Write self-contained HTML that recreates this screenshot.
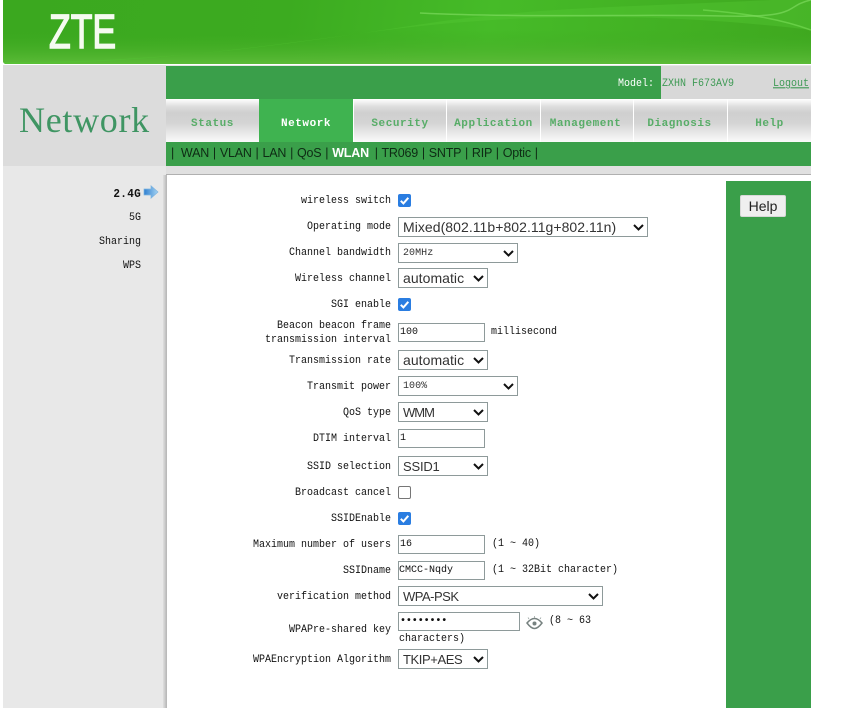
<!DOCTYPE html>
<html>
<head>
<meta charset="utf-8">
<title>ZTE Network</title>
<style>
html,body{margin:0;padding:0;width:841px;height:708px;overflow:hidden;background:#fff}
div,span,input,select,button,svg{position:absolute;box-sizing:border-box}
.m{font-family:"Liberation Mono",monospace;font-size:10px;line-height:14px;color:#111;white-space:pre;margin-top:2px;transform:scaleY(1.12)}
.l{right:450px;text-align:right;margin-top:4px}
.d{margin-top:4px}
.tab{top:99px;height:43px;background:linear-gradient(#fff 0,#f2f2f2 3px,#dcdcdc 8px,#cfcfcf 14px,#d4d4d4 24px,#f0f0f0 38px,#fafafa 43px);font-family:"Liberation Mono",monospace;font-weight:bold;font-size:11px;letter-spacing:.55px;color:#58ad68;text-align:center;line-height:51px;white-space:pre}
select{appearance:none;-webkit-appearance:none;font-family:"Liberation Sans",sans-serif;font-size:14px;letter-spacing:.05px;color:#333;background:#fff;border:1px solid #8e9a9a;border-radius:0;left:398px;height:20px;padding:0 0 0 4px;margin:0;outline:0}
.t{left:398px;width:87px;height:19px;border:1px solid #8e9a9a;background:#fff;font-family:"Liberation Mono",monospace;font-size:10px;line-height:18px;color:#111;padding-left:1px;white-space:pre}
.c{left:398px;width:13px;height:13px;background:#2a7de1;border-radius:2px}
.c svg{left:0;top:0}
.c.off{background:#fff;border:1px solid #767676}
.v{width:11px;height:7px}
</style>
</head>
<body>
<div style="left:3px;top:0;width:808px;height:64px;background:linear-gradient(100deg,#3ba81f 0,#3cab20 35%,#46bb28 60%,#3fa81f 100%);overflow:hidden;border-radius:0 0 0 3px">
<svg width="808" height="64" style="left:0;top:0">
<defs><linearGradient id="g" x1="0" y1="0" x2="0" y2="1"><stop offset="0" stop-color="#3aa81e" stop-opacity="0"/><stop offset="1" stop-color="#5cbb38"/></linearGradient></defs>
<rect y="30" width="808" height="34" fill="url(#g)"/>
<path d="M0 62C180 62 300 42 420 24S620 8 808 -2V0L808 30C640 10 500 16 400 28S160 64 0 64Z" fill="#56c935" opacity=".4"/>
<path d="M700 10C750 14 780 20 808 30" fill="none" stroke="#74d851" stroke-width="1.5" opacity=".7"/>
<path d="M417 13C520 18 640 14 720 16S780 6 808 0" fill="none" stroke="#86e066" stroke-width="1.5" opacity=".6"/>
</svg>
</div>
<div style="left:49px;top:5px;font-family:'Liberation Sans',sans-serif;font-size:48px;line-height:55px;color:#f5fbf0;transform:scaleX(.74);transform-origin:0 0;-webkit-text-stroke:1.5px #f5fbf0;paint-order:stroke;letter-spacing:0">ZTE</div>

<div style="left:3px;top:65px;width:163px;height:101px;background:#dcdcdc"></div>
<div style="left:19px;top:100px;font-family:'Liberation Serif',serif;font-size:36px;line-height:41px;letter-spacing:.7px;color:#3f9563">Network</div>
<div style="left:166px;top:66px;width:495px;height:33px;background:#3a9f4a"></div>
<div style="left:661px;top:65px;width:150px;height:34px;background:#d8d8d8"></div>
<div style="left:166px;top:65px;width:645px;height:1px;background:#e6e6e6"></div>
<div class="m" style="left:618px;top:76px;color:#fff">Model:</div>
<div class="m" style="left:662px;top:76px;color:#3f9a55">ZXHN F673AV9</div>
<div class="m" style="left:773px;top:76px;color:#3f9a55;text-decoration:underline">Logout</div>

<div class="tab" style="left:166px;width:93px">Status</div>
<div class="tab" style="left:259px;width:94px;background:#3fb350;color:#fff">Network</div>
<div class="tab" style="left:354px;width:92px">Security</div>
<div class="tab" style="left:447px;width:93px">Application</div>
<div class="tab" style="left:541px;width:92px;padding-right:3px">Management</div>
<div class="tab" style="left:634px;width:93px;padding-right:2px">Diagnosis</div>
<div class="tab" style="left:728px;width:83px">Help</div>

<div style="left:166px;top:142px;width:645px;height:24px;background:#3a9f4a"></div>
<div style="left:171px;top:145px;font-family:'Liberation Sans',sans-serif;font-size:12.5px;line-height:16px;color:#0e2b14;white-space:pre;letter-spacing:-.2px;word-spacing:.6px"><b style="font-weight:normal;margin-right:3px">|</b> WAN | VLAN | LAN | QoS | <b style="color:#fff;font-weight:bold;margin-right:2px">WLAN</b> | TR069 | SNTP | RIP | Optic |</div>

<div style="left:3px;top:166px;width:163px;height:542px;background:#e8e8e8"></div>
<div style="left:166px;top:166px;width:645px;height:9px;background:#e0e0e0;border-bottom:1px solid #b0b0b0"></div>
<div style="left:163px;top:175px;width:4px;height:533px;background:linear-gradient(90deg,#e0e0e0,#b4b4b4)"></div>

<div class="m" style="right:700px;top:186px;font-weight:bold;font-size:11px;letter-spacing:.3px">2.4G</div>
<svg width="16" height="14" viewBox="0 0 16 14" style="left:143px;top:185px"><defs><linearGradient id="b" x1="0" x2="1"><stop offset="0" stop-color="#2f7fd0"/><stop offset="1" stop-color="#a6d4f2"/></linearGradient></defs><path d="M1 4H8V.8L15 7L8 13.2V10H1Z" fill="url(#b)" stroke="#7fb5e0" stroke-width=".7"/></svg>
<div class="m" style="right:700px;top:210px">5G</div>
<div class="m" style="right:700px;top:234px">Sharing</div>
<div class="m" style="right:700px;top:258px">WPS</div>

<div class="m l" style="top:191px">wireless switch</div>
<div class="m l" style="top:217px">Operating mode</div>
<div class="m l" style="top:243px">Channel bandwidth</div>
<div class="m l" style="top:269px">Wireless channel</div>
<div class="m l" style="top:295px">SGI enable</div>
<div class="m l" style="top:316px">Beacon beacon frame</div>
<div class="m l" style="top:330px">transmission interval</div>
<div class="m l" style="top:351px">Transmission rate</div>
<div class="m l" style="top:377px">Transmit power</div>
<div class="m l" style="top:403px">QoS type</div>
<div class="m l" style="top:429px">DTIM interval</div>
<div class="m l" style="top:457px">SSID selection</div>
<div class="m l" style="top:483px">Broadcast cancel</div>
<div class="m l" style="top:509px">SSIDEnable</div>
<div class="m l" style="top:535px">Maximum number of users</div>
<div class="m l" style="top:561px">SSIDname</div>
<div class="m l" style="top:587px">verification method</div>
<div class="m l" style="top:620px">WPAPre-shared key</div>
<div class="m l" style="top:650px">WPAEncryption Algorithm</div>

<div class="c" style="top:194px"><svg width="13" height="13"><path d="M2.8 6.8L5.4 9.4L10.3 3.8" fill="none" stroke="#fff" stroke-width="2"/></svg></div>
<select style="top:217px;width:250px"><option>Mixed(802.11b+802.11g+802.11n)</option></select>
<svg class="v" style="left:633px;top:224px"><path d="M1 1L5.500 5.500L10 1" fill="none" stroke="#111" stroke-width="2"/></svg>
<select style="top:243px;width:120px;font-family:'Liberation Mono',monospace;font-size:10px"><option>20MHz</option></select>
<svg class="v" style="left:503px;top:250px"><path d="M1 1L5.500 5.500L10 1" fill="none" stroke="#111" stroke-width="2"/></svg>
<select style="top:268px;width:90px"><option>automatic</option></select>
<svg class="v" style="left:473px;top:275px"><path d="M1 1L5.500 5.500L10 1" fill="none" stroke="#111" stroke-width="2"/></svg>
<div class="c" style="top:298px"><svg width="13" height="13"><path d="M2.8 6.8L5.4 9.4L10.3 3.8" fill="none" stroke="#fff" stroke-width="2"/></svg></div>
<div class="t" style="top:323px">100</div>
<div class="m d" style="left:491px;top:322px">millisecond</div>
<select style="top:350px;width:90px"><option>automatic</option></select>
<svg class="v" style="left:473px;top:357px"><path d="M1 1L5.500 5.500L10 1" fill="none" stroke="#111" stroke-width="2"/></svg>
<select style="top:376px;width:120px;font-family:'Liberation Mono',monospace;font-size:10px"><option>100%</option></select>
<svg class="v" style="left:503px;top:383px"><path d="M1 1L5.500 5.500L10 1" fill="none" stroke="#111" stroke-width="2"/></svg>
<select style="top:402px;width:90px;font-size:13px;letter-spacing:-1px"><option>WMM</option></select>
<svg class="v" style="left:473px;top:409px"><path d="M1 1L5.500 5.500L10 1" fill="none" stroke="#111" stroke-width="2"/></svg>
<div class="t" style="top:429px">1</div>
<select style="top:456px;width:90px;font-size:13px;letter-spacing:-.2px"><option>SSID1</option></select>
<svg class="v" style="left:473px;top:463px"><path d="M1 1L5.500 5.500L10 1" fill="none" stroke="#111" stroke-width="2"/></svg>
<div class="c off" style="top:486px"></div>
<div class="c" style="top:512px"><svg width="13" height="13"><path d="M2.8 6.8L5.4 9.4L10.3 3.8" fill="none" stroke="#fff" stroke-width="2"/></svg></div>
<div class="t" style="top:535px">16</div>
<div class="m d" style="left:492px;top:534px">(1 ~ 40)</div>
<div class="t" style="top:561px;padding-left:0">CMCC-Nqdy</div>
<div class="m d" style="left:492px;top:560px">(1 ~ 32Bit character)</div>
<select style="top:586px;width:205px;font-size:13px;letter-spacing:-.5px"><option>WPA-PSK</option></select>
<svg class="v" style="left:588px;top:593px"><path d="M1 1L5.500 5.500L10 1" fill="none" stroke="#111" stroke-width="2"/></svg>
<div class="t" style="top:612px;width:122px;font-size:10px;line-height:17px;padding-left:1px;font-weight:bold;letter-spacing:-.1px">••••••••</div>
<svg width="17" height="15" viewBox="0 0 17 15" style="left:526px;top:615px"><path d="M1 8C4 4.500 7 3.500 8.500 3.500S13 4.500 16 8C13 12 10.500 13.500 8.500 13.500S4 12 1 8Z" fill="none" stroke="#778280" stroke-width="1.500"/><circle cx="8.500" cy="8.500" r="2" fill="#778280"/><path d="M3 4L2 2.500M8.500 3V1M14 4L15 2.500" stroke="#9aa4a2" stroke-width=".8"/></svg>
<div class="m d" style="left:549px;top:611px">(8 ~ 63</div>
<div class="m d" style="left:399px;top:629px">characters)</div>
<select style="top:649px;width:90px;font-size:13px;letter-spacing:-.4px"><option>TKIP+AES</option></select>
<svg class="v" style="left:473px;top:656px"><path d="M1 1L5.500 5.500L10 1" fill="none" stroke="#111" stroke-width="2"/></svg>

<div style="left:726px;top:181px;width:85px;height:527px;background:#3a9f4a"></div>
<button style="left:740px;top:195px;width:46px;height:22px;background:#efefef;border:1px solid #d8d8d8;border-radius:2px;font-family:'Liberation Sans',sans-serif;font-size:14px;color:#222;padding:0">Help</button>
</body>
</html>
